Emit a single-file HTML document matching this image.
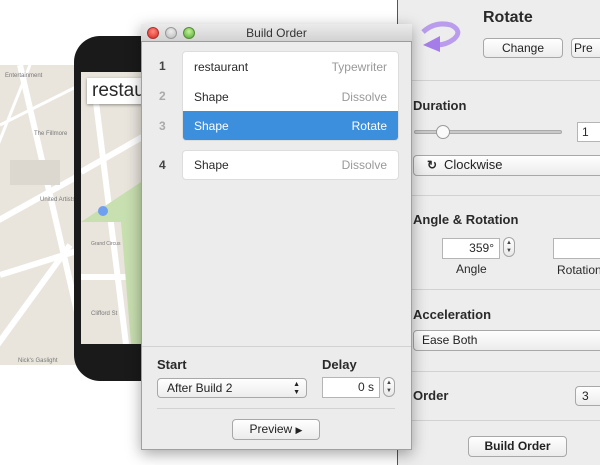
<!DOCTYPE html>
<html><head><style>
*{margin:0;padding:0;box-sizing:border-box}
body{width:600px;height:465px;overflow:hidden;background:#fff;position:relative;font-family:"Lucida Grande","Liberation Sans",sans-serif;font-size:12px;color:#2a2a2a}
.a{position:absolute}
.btn{position:absolute;background:linear-gradient(#fff,#ececec);border:1px solid #a8a8a8;border-radius:4px;text-align:center;font-size:12px;line-height:18px;color:#222}
.fld{position:absolute;background:#fff;border:1px solid #b5b5b5;text-align:right;padding-right:5px;font-size:12px;line-height:18px}
.step{position:absolute;width:12px;height:20px;border:1px solid #a5a5a5;border-radius:6px;background:linear-gradient(#fff,#e8e8e8);font-size:6px;line-height:8px;text-align:center;color:#444;padding-top:1px}
.hd{position:absolute;font-weight:bold;font-size:13px;color:#2a2a2a}
.sep{position:absolute;height:1px;background:#d2d2d2}
.row{position:absolute;left:0;right:0;height:30px;line-height:30px;padding:0 11px;font-size:12px}
.row span{float:right;color:#999}
.num{position:absolute;left:159px;font-weight:bold;font-size:12px;color:#444}
</style></head><body>
<div class="a" style="left:0;top:65px;width:80px;height:300px;background:#e9e5dd;overflow:hidden">
<svg width="80" height="300"><g stroke="#fff" stroke-width="6" fill="none">
<line x1="-10" y1="160" x2="80" y2="110"/><line x1="20" y1="0" x2="80" y2="260"/><line x1="0" y1="210" x2="80" y2="185"/><line x1="-10" y1="290" x2="70" y2="180"/></g>
<g stroke="#fff" stroke-width="3"><line x1="0" y1="60" x2="80" y2="20"/><line x1="30" y1="0" x2="-10" y2="100"/></g>
<rect x="10" y="95" width="50" height="25" fill="#dcd8d0"/>
<text x="5" y="12" font-size="6" fill="#777">Entertainment</text><text x="40" y="136" font-size="6" fill="#777">United Artists</text><text x="34" y="70" font-size="6" fill="#777">The Fillmore</text><text x="18" y="297" font-size="6" fill="#777">Nick's Gaslight</text></svg></div>
<div class="a" style="left:74px;top:36px;width:80px;height:345px;background:#1a1a1a;border-radius:26px 0 0 26px"></div>
<div class="a" style="left:81px;top:72px;width:70px;height:272px;background:#e9e5dd;overflow:hidden">
<svg width="70" height="272"><g stroke="#fff" stroke-width="6" fill="none"><line x1="0" y1="100" x2="70" y2="60"/><line x1="15" y1="30" x2="45" y2="272"/><line x1="0" y1="205" x2="70" y2="205"/></g>
<path d="M0 150 L60 110 L70 160 L70 272 L50 272 L40 150 Z" fill="#c8dfb0"/><circle cx="22" cy="139" r="5" fill="#6f9ff0"/>
<text x="10" y="243" font-size="6" fill="#777">Clifford St</text><text x="10" y="173" font-size="5" fill="#777">Grand Circus</text></svg>
<div class="a" style="left:6px;top:6px;width:64px;height:26px;background:#fff;box-shadow:0 1px 3px rgba(0,0,0,.4);font-family:'Liberation Sans';font-size:19px;line-height:26px;padding-left:5px">restau</div></div>
<div class="a" style="left:397px;top:0;width:1px;height:465px;background:#555"></div>
<div class="a" style="left:398px;top:0;width:202px;height:465px;background:#ededed"></div>
<svg class="a" style="left:413px;top:20px" width="52" height="34"><path d="M10 12 Q22 1 38 5 Q50 11 41 19 Q33 25 24 25" fill="none" stroke="#b99cec" stroke-width="5"/><path d="M27 16 L10 25 L27 32 Z" fill="#a57de8"/></svg>
<div class="a" style="left:483px;top:9px;font-weight:bold;font-size:16px">Rotate</div>
<div class="btn" style="left:483px;top:38px;width:80px;height:20px">Change</div>
<div class="btn" style="left:571px;top:38px;width:40px;height:20px;text-align:left;padding-left:2px">Pre</div>
<div class="sep" style="left:412px;top:80px;width:188px"></div>
<div class="hd" style="left:413px;top:98px">Duration</div>
<div class="a" style="left:414px;top:130px;width:148px;height:4px;border-radius:2px;background:#c9c9c9;border:1px solid #aaa"></div>
<div class="a" style="left:436px;top:125px;width:14px;height:14px;border-radius:7px;background:#fafafa;border:1px solid #999"></div>
<div class="fld" style="left:577px;top:122px;width:30px;height:20px;text-align:left;padding-left:4px">1</div>
<div class="btn" style="left:413px;top:155px;width:195px;height:21px;text-align:left;padding-left:30px;font-size:13px">Clockwise</div>
<div class="a" style="left:427px;top:158px;font-size:12px;font-weight:bold">&#x21BB;</div>
<div class="sep" style="left:412px;top:195px;width:188px"></div>
<div class="hd" style="left:413px;top:212px">Angle &amp; Rotation</div>
<div class="fld" style="left:442px;top:238px;width:58px;height:21px">359°</div>
<div class="step" style="left:503px;top:237px">▲<br>▼</div>
<div class="a" style="left:456px;top:262px;font-size:12px">Angle</div>
<div class="fld" style="left:553px;top:238px;width:60px;height:21px"></div>
<div class="a" style="left:557px;top:263px;font-size:12px">Rotation</div>
<div class="sep" style="left:412px;top:289px;width:188px"></div>
<div class="hd" style="left:413px;top:307px">Acceleration</div>
<div class="btn" style="left:413px;top:330px;width:195px;height:21px;text-align:left;padding-left:8px">Ease Both</div>
<div class="sep" style="left:412px;top:371px;width:188px"></div>
<div class="hd" style="left:413px;top:388px">Order</div>
<div class="btn" style="left:575px;top:386px;width:35px;height:20px;text-align:left;padding-left:6px">3</div>
<div class="sep" style="left:412px;top:420px;width:188px"></div>
<div class="btn" style="left:468px;top:436px;width:99px;height:21px;font-weight:bold">Build Order</div>
<div class="a" style="left:141px;top:24px;width:271px;height:426px;background:#ececec;border:1px solid #a0a0a0;border-top:none;box-shadow:0 4px 14px rgba(0,0,0,.35)"></div>
<div class="a" style="left:141px;top:24px;width:271px;height:18px;background:linear-gradient(#ebebeb,#d2d2d2);border-bottom:1px solid #9c9c9c;text-align:center;font-size:12px;line-height:18px;color:#333">Build Order</div>
<div class="a" style="left:147px;top:27px;width:12px;height:12px;border-radius:6px;background:radial-gradient(circle at 50% 35%,#ff8a80,#d9261b);border:1px solid #a33"></div>
<div class="a" style="left:165px;top:27px;width:12px;height:12px;border-radius:6px;background:radial-gradient(circle at 50% 35%,#eee,#b8b8b8);border:1px solid #999"></div>
<div class="a" style="left:183px;top:27px;width:12px;height:12px;border-radius:6px;background:radial-gradient(circle at 50% 35%,#c6f29a,#4aa930);border:1px solid #5a8a3a"></div>
<div class="num" style="top:59px">1</div><div class="num" style="top:89px;color:#aaa">2</div><div class="num" style="top:119px;color:#aaa">3</div><div class="num" style="top:158px">4</div>
<div class="a" style="left:182px;top:51px;width:217px;height:90px;background:#fff;border:1px solid #ddd;border-radius:4px;overflow:hidden">
<div class="row" style="top:0">restaurant<span>Typewriter</span></div>
<div class="row" style="top:30px">Shape<span>Dissolve</span></div>
<div class="row" style="top:59px;background:#3c8fdd;color:#fff">Shape<span style="color:#fff">Rotate</span></div></div>
<div class="a" style="left:182px;top:150px;width:217px;height:30px;background:#fff;border:1px solid #ddd;border-radius:4px"><div class="row" style="top:-1px">Shape<span>Dissolve</span></div></div>
<div class="sep" style="left:142px;top:346px;width:269px"></div>
<div class="hd" style="left:157px;top:357px">Start</div>
<div class="hd" style="left:322px;top:357px">Delay</div>
<div class="btn" style="left:157px;top:378px;width:150px;height:20px;text-align:left;padding-left:9px">After Build 2<span style="position:absolute;right:6px;top:0;font-size:7px;line-height:8px;padding-top:2px">▲<br>▼</span></div>
<div class="fld" style="left:322px;top:377px;width:58px;height:21px">0 s</div>
<div class="step" style="left:383px;top:377px">▲<br>▼</div>
<div class="sep" style="left:157px;top:408px;width:238px"></div>
<div class="btn" style="left:232px;top:419px;width:88px;height:21px">Preview <span style="font-size:9px">▶</span></div>
</body></html>
